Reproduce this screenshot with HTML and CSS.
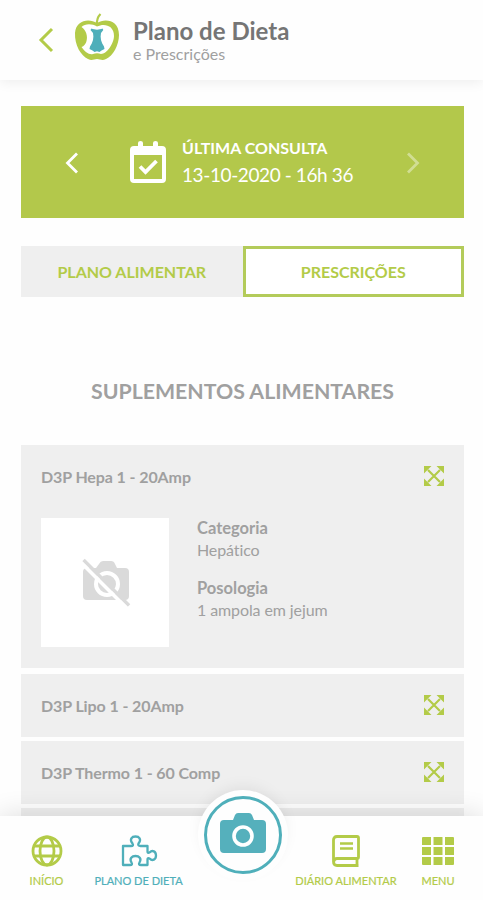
FILE: index.html
```html
<!DOCTYPE html>
<html lang="pt">
<head>
    <meta charset="UTF-8">
    <meta name="viewport" content="width=device-width, initial-scale=1.0">
    <title>Plano de Dieta</title>
    <link rel="stylesheet" href="styles.css">
</head>
<body>
    <!-- Shared icon -->
    <svg class="sprite">
        <symbol id="expand" viewBox="0 0 20 20">
            <path d="M4 4l12 12M16 4L4 16" stroke="currentColor" stroke-width="2.200" fill="none"/>
            <path d="M0 0h7.500L2.200 5.300 0 7.500zM20 0v7.500L12.500 0zM0 20v-7.500L7.500 20zM20 20h-7.500l7.500-7.500z" fill="currentColor"/>
        </symbol>
    </svg>

    <div class="app">
        <header>
            <svg class="back" viewBox="0 0 16 26"><path d="M14 2L3 13l11 11" fill="none" stroke="currentColor" stroke-width="3"/></svg>
            <svg class="logo" viewBox="0 0 46 50">
                <path d="M23 11C15 6 2 8 1 21C.5 33 7 44 14 47C18 49 20 47 23 47C26 47 28 49 32 47C39 44 45 33 45 23C45 8 31 6 23 11Z" fill="#b3cb48"/>
                <path d="M23 14.500C18 11.500 11 11.500 7.500 15C12 18 14 24 12.500 29C11.500 33 9 34.500 7.500 35C11 40 15 43 19 42C21.500 41 24.500 41 27 42C33 42 40 31 40 24C40 13 30 11 23 14.500Z" fill="#fff"/>
                <path d="M17.500 16.500c3 1.500 8 1.500 11 0l.8 1.500-2.300 3c-1 5 0 9 3 13.500l.5 2.500-3 1.500-2 1.500-2.500-.8-2.500.8-2-1.500-3-1.500.5-2.500c3-4.500 4-8.500 3-13.500L16.500 18z" fill="#4fafba"/>
                <path d="M23 13C22.500 8 23.500 5 26.500 2" fill="none" stroke="#b3cb48" stroke-width="2.200"/>
            </svg>
            <div class="header-text">
                <h1>Plano de Dieta</h1>
                <p>e Prescrições</p>
            </div>
        </header>

        <main>
            <section class="consult">
                <svg class="arrow prev" viewBox="0 0 14 22"><path d="M12 1.500L2.500 11l9.500 9.500" fill="none" stroke="currentColor" stroke-width="2.800"/></svg>
                <svg class="calendar" viewBox="0 0 36 42">
                    <path d="M4 5h4V2q0-2 2.500-2T13 2v3h10V2q0-2 2.500-2T28 2v3h4q4 0 4 4v29q0 4-4 4H4q-4 0-4-4V9q0-4 4-4zM4 14v24h28V14z" fill="currentColor" fill-rule="evenodd"/>
                    <path d="M10 25.500l5.500 5.500L26.500 20" fill="none" stroke="currentColor" stroke-width="3.800"/>
                </svg>
                <div class="consult-text">
                    <h2>ÚLTIMA CONSULTA</h2>
                    <p>13-10-2020 - 16h 36</p>
                </div>
                <svg class="arrow next" viewBox="0 0 14 22"><path d="M2 1.500L11.500 11 2 20.500" fill="none" stroke="currentColor" stroke-width="2.800"/></svg>
            </section>

            <div class="tabs">
                <button class="tab">PLANO ALIMENTAR</button>
                <button class="tab active">PRESCRIÇÕES</button>
            </div>

            <h2 class="section-title">SUPLEMENTOS ALIMENTARES</h2>

            <div class="cards">
                <article class="card open">
                    <div class="card-head">
                        <h3>D3P Hepa 1 - 20Amp</h3>
                        <svg class="expand"><use href="#expand"/></svg>
                    </div>
                    <div class="card-body">
                        <div class="photo">
                            <svg viewBox="0 0 48 48">
                                <path d="M5 8h9l3-4q1.500-3 4-3h8q3 0 4 3l2 4h8q4 0 4 4v24q0 4-4 4H5q-4 0-4-4V12q0-4 4-4z" fill="#dadada"/>
                                <circle cx="25" cy="24" r="11" fill="none" stroke="#fff" stroke-width="4"/>
                                <path d="M1.500 0L47 45.500" stroke="#dadada" stroke-width="3.500"/>
                                <path d="M-1 2.500L44.500 48" stroke="#fff" stroke-width="3.500"/>
                            </svg>
                        </div>
                        <dl>
                            <dt>Categoria</dt>
                            <dd>Hepático</dd>
                            <dt>Posologia</dt>
                            <dd>1 ampola em jejum</dd>
                        </dl>
                    </div>
                </article>
                <article class="card">
                    <div class="card-head">
                        <h3>D3P Lipo 1 - 20Amp</h3>
                        <svg class="expand"><use href="#expand"/></svg>
                    </div>
                </article>
                <article class="card">
                    <div class="card-head">
                        <h3>D3P Thermo 1 - 60 Comp</h3>
                        <svg class="expand"><use href="#expand"/></svg>
                    </div>
                </article>
                <article class="card"></article>
            </div>
        </main>

        <nav>
            <a class="item home">
                <svg viewBox="0 0 32 32" fill="none" stroke="currentColor" stroke-width="2.800">
                    <circle cx="16" cy="16" r="14"/>
                    <ellipse cx="16" cy="16" rx="7" ry="14"/>
                    <path d="M3 11h26M3 21h26"/>
                </svg>
                <span>INÍCIO</span>
            </a>
            <a class="item diet">
                <svg viewBox="0 0 36 32" fill="none" stroke="currentColor" stroke-width="2.300" stroke-linejoin="round">
                    <path d="M2 11h8q3 0 1.500-2.500C8 4 11 1.500 14.500 1.500s6.500 2.500 3 7Q16.500 11 19.500 11h7v5.500q0 2 2 1c3-3 6.500-1 6.500 3s-3.500 6-6.500 3q-2-1-2 1v5.500h-6.500q-3 0-1.500-2.500c2.500-4-.5-6.500-4-6.500s-6.500 2.500-4 6.500q1.500 2.500-1.500 2.500H2z"/>
                </svg>
                <span>PLANO DE DIETA</span>
            </a>
            <a class="item diary">
                <svg viewBox="0 0 28 32" fill="none" stroke="currentColor" stroke-width="2.800">
                    <path d="M5 1.500H25q1.500 0 1.500 1.500V22q0 1.500-1.500 1.500H5q-3 0-3 3M5 1.500Q1.500 1.500 1.500 5v21.500Q1.500 30.500 5 30.500h21.500M25 23v8"/>
                    <path d="M8 8.500h13M8 13.500h13" stroke-width="2.400"/>
                </svg>
                <span>DIÁRIO ALIMENTAR</span>
            </a>
            <a class="item menu">
                <svg viewBox="0 0 32 28" fill="currentColor">
                    <path d="M0 1q0-1 1-1h8v8H0zM11.500 0h9v8h-9zM23 0h8q1 0 1 1v7h-9zM0 10h9v8H0zM11.500 10h9v8h-9zM23 10h9v8h-9zM0 20h9v8H1q-1 0-1-1zM11.500 20h9v8h-9zM23 20h9v7q0 1-1 1h-8z"/>
                </svg>
                <span>MENU</span>
            </a>
            <button class="camera">
                <svg viewBox="0 0 46 40">
                    <path d="M4 7h9l2-5q1-2 3-2h11q2 0 3 2l2 5h8q4 0 4 4v25q0 4-4 4H4q-4 0-4-4V11q0-4 4-4z" fill="currentColor"/>
                    <circle cx="23" cy="23" r="9" fill="none" stroke="#fff" stroke-width="3.600"/>
                </svg>
            </button>
        </nav>
    </div>
</body>
</html>
```
FILE: styles.css
```css
* {
    box-sizing: border-box;
}

body {
    margin: 0;
    font-family: 'Lato', sans-serif;
    font-variant-ligatures: none;
    background: #fefefe;
    color: #a0a0a0;
}

h1, h2, h3, p, dl, dd {
    margin: 0;
}

button {
    font-family: inherit;
    padding: 0;
    border: none;
}

svg {
    display: block;
    flex-shrink: 0;
    overflow: visible;
}

.sprite {
    width: 0;
    height: 0;
    position: absolute;
}

.app {
    display: flex;
    flex-direction: column;
    height: 900px;
    overflow: hidden;
}

/* Header */
header {
    display: flex;
    align-items: flex-start;
    flex-shrink: 0;
    height: 80px;
    padding: 12px 38px 0;
    background: #fefefe;
    box-shadow: 0 2px 12px rgba(0, 0, 0, 0.07);
    color: #b3cb48;
}

.back {
    width: 16px;
    height: 26px;
    margin-top: 15px;
}

.logo {
    width: 46px;
    height: 50px;
    margin-left: 20px;
}

.header-text {
    margin: 4px 0 0 13px;
}

h1 {
    font-size: 24px;
    line-height: 30px;
    color: #757575;
}

.header-text p {
    font-size: 16px;
    line-height: 16px;
    color: #a0a0a0;
}

main {
    flex: 1;
    min-height: 0;
    padding: 26px 19px 0 21px;
    overflow: hidden;
}

/* Last appointment */
.consult {
    display: flex;
    align-items: center;
    height: 112px;
    padding: 0 44px;
    background: #b3c84b;
    color: #fff;
}

.arrow {
    width: 14px;
    height: 22px;
    margin-top: 2px;
}

.next {
    margin-left: auto;
    opacity: 0.4;
}

.calendar {
    width: 36px;
    height: 42px;
    margin-left: 51px;
}

.consult-text {
    margin: -2px 0 0 16px;
}

.consult h2 {
    font-size: 16px;
    line-height: 26px;
}

.consult p {
    font-size: 19px;
    line-height: 27px;
    letter-spacing: -0.4px;
}

/* Tabs */
.tabs {
    display: flex;
    height: 51px;
    margin-top: 28px;
}

.tab {
    width: 50%;
    background: #efefef;
    color: #b3cb48;
    font-size: 16px;
    font-weight: bold;
}

.tab.active {
    background: #fff;
    border: 3px solid #b3cb5a;
}

.section-title {
    margin: 78px 0 38px;
    text-align: center;
    font-size: 21.300px;
    line-height: 32px;
}

/* Supplements */
.cards {
    display: flex;
    flex-direction: column;
    gap: 4px;
}

.card {
    flex-shrink: 0;
    height: 63px;
    padding: 0 20px;
    background: #efefef;
}

.card.open {
    height: 223px;
    margin-bottom: 2px;
}

.card-head {
    display: flex;
    align-items: center;
    justify-content: space-between;
    height: 62px;
}

.card h3 {
    font-size: 16px;
    letter-spacing: -0.1px;
}

.expand {
    width: 20px;
    height: 20px;
    color: #b3cb48;
}

.card-body {
    display: flex;
    gap: 28px;
    padding-top: 11px;
}

.photo {
    display: flex;
    align-items: center;
    justify-content: center;
    width: 128px;
    height: 129px;
    background: #fff;
}

.photo svg {
    width: 48px;
    height: 48px;
    margin: 3px 0 0 2px;
}

dl {
    font-size: 16px;
    line-height: 21px;
}

dt {
    font-size: 16.500px;
    font-weight: bold;
}

dd {
    margin-bottom: 18px;
    letter-spacing: -0.1px;
}

/* Bottom navigation */
nav {
    position: relative;
    display: flex;
    flex-shrink: 0;
    height: 84px;
    background: #fefefe;
    box-shadow: 0 0 28px rgba(0, 0, 0, 0.14);
}

.item {
    display: flex;
    flex-direction: column;
    align-items: center;
    justify-content: space-between;
    height: 72px;
    padding-top: 19px;
    color: #b3cb48;
    font-size: 11px;
    line-height: 15px;
    white-space: nowrap;
    -webkit-text-stroke: 0.2px currentColor;
}

.home {
    width: 93px;
}

.home svg {
    width: 32px;
    height: 32px;
}

.diet {
    width: 91px;
    color: #4fafba;
}

.diet svg {
    width: 36px;
    height: 32px;
}

.diary {
    width: 120px;
    margin-left: 102px;
}

.diary svg {
    width: 28px;
    height: 32px;
}

.menu {
    width: 64px;
}

.menu svg {
    width: 32px;
    height: 28px;
    margin-top: 2px;
}

.camera {
    position: absolute;
    top: -26px;
    left: 198px;
    display: flex;
    align-items: center;
    justify-content: center;
    width: 90px;
    height: 90px;
    border-radius: 50%;
    background: #fefefe;
    box-shadow: 0 -6px 16px -4px rgba(0, 0, 0, 0.08);
    color: #55b0bc;
}

/* teal ring inside the white disc */
.camera::before {
    content: "";
    position: absolute;
    inset: 6px;
    border: 3px solid #4fafba;
    border-radius: 50%;
}

.camera svg {
    width: 46px;
    height: 40px;
    margin-bottom: 4px;
}
```
